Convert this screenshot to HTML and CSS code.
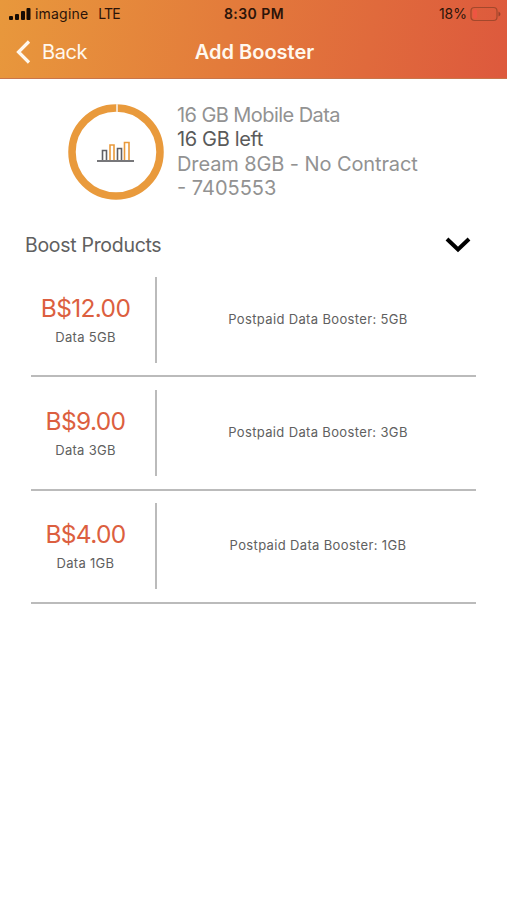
FILE: index.html
```html
<!DOCTYPE html>
<html lang="en">
<head>
<meta charset="utf-8">
<title>Add Booster</title>
<link rel="stylesheet" href="styles.css">
</head>
<body>
<header class="header">
  <div class="status">
    <div class="carrier">
      <svg class="signal" width="22" height="14" viewBox="0 0 22 14"><rect x="0" y="9" width="4" height="4" rx="1"/><rect x="6" y="7" width="4" height="6" rx="1"/><rect x="12" y="4" width="4" height="9" rx="1"/><rect x="17.500" y="1" width="4" height="12" rx="1"/></svg>
      <span class="name">imagine</span><span class="lte">LTE</span>
    </div>
    <span class="time">8:30 PM</span>
    <div class="power">
      <span class="percent">18%</span>
      <svg width="31" height="16" viewBox="0 0 31 16" fill="none"><rect x="1" y="1.500" width="26" height="13" rx="3.500" stroke="#a3482c" stroke-width="1.200"/><rect x="3" y="3.500" width="4" height="9" rx="1.500" fill="#ee5542"/><path d="M28.500 5.500v5q2-1 2-2.500t-2-2.500z" fill="#98402a"/></svg>
    </div>
  </div>
  <nav class="nav">
    <a class="back"><svg width="15" height="24" viewBox="0 0 15 24" fill="none"><path d="M13 1.500 2.500 12 13 22.500" stroke="#fff8ee" stroke-width="3.200"/></svg><span>Back</span></a>
    <h1 class="title">Add Booster</h1>
  </nav>
</header>
<main>
  <section class="usage">
    <svg class="ring" width="96" height="96" viewBox="0 0 96 96" fill="none">
      <circle cx="48" cy="48" r="44" stroke="#e99a3c" stroke-width="7.500"/>
      <path d="M49 0v8" stroke="#f5dfc5" stroke-width="2"/>
      <path d="M34.500 56V46.500h4V56M49.500 56V44.500h4V56" stroke="#606066" stroke-width="1.600"/>
      <path d="M42 56V41h4V56M56.500 56V38.500h4.500V56" stroke="#e99a3c" stroke-width="1.600"/>
      <path d="M29 57h37" stroke="#77777a" stroke-width="1.800"/>
    </svg>
    <div class="plan">
      <div class="total">16 GB Mobile Data</div>
      <div class="left">16 GB left</div>
      <div class="contract">Dream 8GB - No Contract</div>
      <div>- 7405553</div>
    </div>
  </section>
  <div class="section-head">
    <h2>Boost Products</h2>
    <svg width="26" height="16" viewBox="0 0 26 16" fill="none"><path d="M2 2 13 12.500 24 2" stroke="#000" stroke-width="4"/></svg>
  </div>
  <ul class="products">
    <li class="product"><div class="offer"><div class="price">B$12.00</div><div class="size">Data 5GB</div></div><div class="desc">Postpaid Data Booster: 5GB</div></li>
    <li class="product"><div class="offer"><div class="price">B$9.00</div><div class="size">Data 3GB</div></div><div class="desc">Postpaid Data Booster: 3GB</div></li>
    <li class="product"><div class="offer"><div class="price">B$4.00</div><div class="size">Data 1GB</div></div><div class="desc">Postpaid Data Booster: 1GB</div></li>
  </ul>
</main>
</body>
</html>
```
FILE: styles.css
```css
* { box-sizing: border-box; }
body { margin: 0; background: #fff; font-family: Inter, "Liberation Sans", sans-serif; color: #606060; }
h1, h2 { margin: 0; font-weight: 400; }
svg { flex: none; display: block; }
.header { height: 79px; background: linear-gradient(100deg, #e8983c 0%, #e37b3b 45%, #dd593d 100%); border-bottom: 1px solid #c9754a; }
.status { height: 27px; padding: 0 6px 0 9px; display: grid; grid-template-columns: 1fr auto 1fr; align-items: center; color: #2b1409; font-size: 14px; line-height: 27px; }
.carrier, .power { display: flex; align-items: center; }
.signal { fill: #160b04; }
.name { margin-left: 4px; letter-spacing: 0.2px; }
.lte { margin-left: 10px; letter-spacing: -0.8px; }
.time { font-weight: 600; font-size: 14px; letter-spacing: 0.45px; margin-right: 2px; }
.power { justify-content: flex-end; gap: 3px; }
.nav { height: 50px; display: grid; grid-template-columns: 1fr auto 1fr; align-items: center; color: #fff8ee; padding: 0 15px 0 16px; }
.back { display: flex; align-items: center; gap: 11px; font-size: 20px; letter-spacing: -0.4px; }
.title { font-size: 20px; font-weight: 600; margin-left: 1px; }
.usage { display: flex; padding: 25px 0 0 68px; height: 136px; }
.plan { margin: -1px 0 0 13px; font-size: 20px; line-height: 24.300px; color: #929292; white-space: nowrap; }
.total { letter-spacing: -0.57px; }
.left { color: #5a5a5a; letter-spacing: -0.35px; }
.contract { letter-spacing: -0.1px; }
.section-head { display: flex; justify-content: space-between; align-items: center; height: 60px; padding: 0 36px 0 25px; }
.section-head h2 { font-size: 19.500px; letter-spacing: -0.3px; }
.products { list-style: none; margin: -11px 0 0; padding: 0 31px; }
.product { height: 113.300px; display: flex; align-items: center; border-bottom: 2px solid #bbb; }
.offer { width: 126px; height: 86px; border-right: 2px solid #bbb; text-align: center; padding-right: 15px; }
.price { color: #dc5f40; font-size: 24.500px; line-height: 30px; margin-top: 16px; letter-spacing: -0.65px; }
.size { font-size: 13px; line-height: 18px; margin-top: 5px; letter-spacing: 0.3px; }
.desc { flex: 1; text-align: center; font-size: 13px; letter-spacing: 0.35px; padding: 0 0 2px 3px; }
```
